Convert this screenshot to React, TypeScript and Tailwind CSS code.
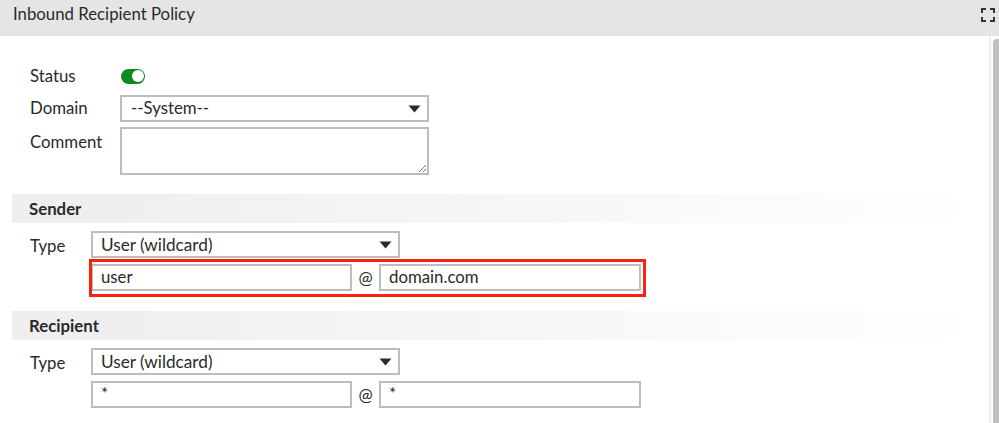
import React from 'react';

const fontStack = { fontFamily: 'Lato, "Liberation Sans", sans-serif' };

const Caret = () => (
  <svg width="13" height="8" viewBox="0 0 13 8" className="shrink-0">
    <path d="M0.5 0.5 H12.5 L6.5 7.5 Z" fill="#2b2b2b" />
  </svg>
);

const Select: React.FC<{ value: string; className?: string }> = ({ value, className }) => (
  <div className={`flex h-[27px] w-[309px] items-center justify-between border-2 border-[#bdbdbd] pr-[6px] ${className}`}>
    <span>{value}</span>
    <Caret />
  </div>
);

const Address: React.FC<{ user: string; domain: string; star?: boolean }> = ({ user, domain, star }) => (
  <div className="flex items-center">
    <div className={`flex h-[27px] w-[261px] border-2 border-[#bdbdbd] pl-[8px] ${star ? 'items-start pt-[3px]' : 'items-center'}`}>{user}</div>
    <div className="w-[27px] text-center text-[17px]">@</div>
    <div className={`flex h-[27px] w-[262px] border-2 border-[#bdbdbd] pl-[8px] ${star ? 'items-start pt-[3px]' : 'items-center'}`}>{domain}</div>
  </div>
);

const SectionHead: React.FC<{ title: string }> = ({ title }) => (
  <div className="ml-3 flex h-[29px] items-center bg-gradient-to-r from-[#efefef] from-10% to-white pl-[17px] pt-[1px] font-bold">{title}</div>
);

const App: React.FC = () => {
  return (
    <div className="h-[423px] w-[999px] overflow-hidden bg-white text-[16.8px] leading-none text-[#2a2a2a]" style={fontStack}>
      <div className="flex h-[36px] items-start justify-between bg-[#e5e5e5] pl-[13px] pr-[4px] pt-[6px]">
        <span>Inbound Recipient Policy</span>
        <svg width="14" height="14" viewBox="0 0 14 14" fill="none" stroke="#333" strokeWidth="2" className="mt-[2px]">
          <path d="M1 5 V1 H5 M9 1 H13 V5 M13 9 V13 H9 M5 13 H1 V9" />
        </svg>
      </div>

      <div className="flex h-[387px]">
        <div className="min-w-0 flex-1">
          <div className="pl-[30px] pt-[30px]">
            <div className="flex h-[20px] items-center">
              <span className="w-[91px]">Status</span>
              <span className="flex h-[15px] w-[24px] items-center justify-end rounded-full bg-[#0f8a1f] pr-[1px]">
                <span className="h-[12px] w-[12px] rounded-full bg-white" />
              </span>
            </div>
            <div className="mt-[9px] flex h-[27px] items-center">
              <span className="w-[90px]">Domain</span>
              <Select value="--System--" className="pl-[9px]" />
            </div>
            <div className="mt-[5px] flex">
              <span className="w-[90px] pt-[7px]">Comment</span>
              <div className="relative h-[48px] w-[309px] border-2 border-[#bdbdbd]">
                <svg width="9" height="9" viewBox="0 0 9 9" className="absolute bottom-0 right-0" stroke="#777" strokeWidth="1">
                  <path d="M1 8 L8 1 M5 8 L8 5" />
                </svg>
              </div>
            </div>
          </div>

          <div className="mt-[19px]">
            <SectionHead title="Sender" />
            <div className="mt-[8px] flex pl-[30px]">
              <span className="w-[61px] pt-[7px]">Type</span>
              <div>
                <Select value="User (wildcard)" className="pl-[8px] text-[17.2px]" />
                <div className="relative mt-[6px]">
                  <Address user="user" domain="domain.com" />
                  <div className="absolute -left-[2px] -right-[5px] -top-[5px] -bottom-[6px] border-[3px] border-[#fa2210]" />
                </div>
              </div>
            </div>
          </div>

          <div className="mt-[20px]">
            <SectionHead title="Recipient" />
            <div className="mt-[8px] flex pl-[30px]">
              <span className="w-[61px] pt-[7px]">Type</span>
              <div>
                <Select value="User (wildcard)" className="pl-[8px] text-[17.2px]" />
                <div className="mt-[6px]">
                  <Address user="*" domain="*" star />
                </div>
              </div>
            </div>
          </div>
        </div>

        {/* scrollbar */}
        <div className="w-[10px] shrink-0 border-l-2 border-[#eeeeee] pl-[2px] pt-[3px]">
          <div className="h-full rounded-tl-[4px] bg-[#c0c0c0]" />
        </div>
      </div>
    </div>
  );
};

export default App;
